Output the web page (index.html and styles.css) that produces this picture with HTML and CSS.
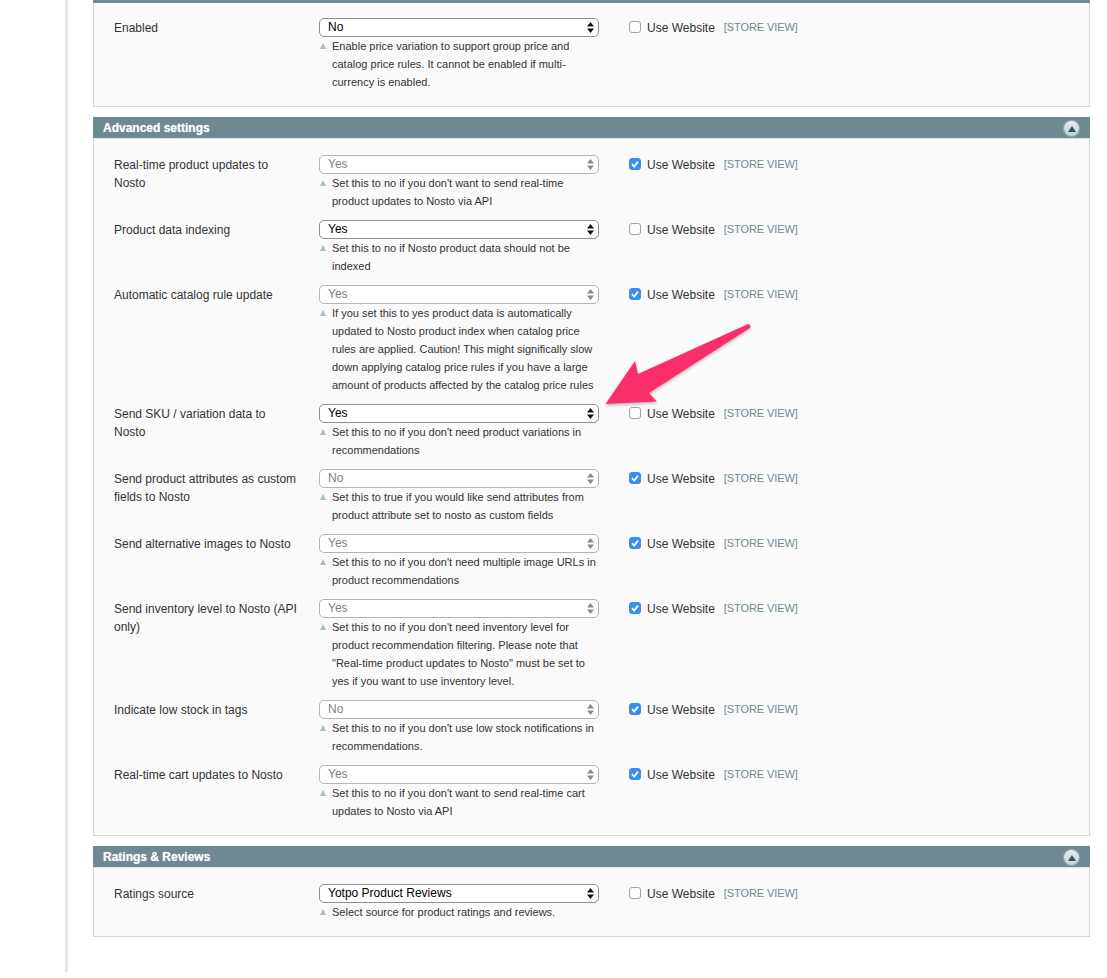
FILE: index.html
```html
<!DOCTYPE html>
<html lang="en">
<head>
<meta charset="utf-8">
<title>Nosto settings</title>
<link rel="stylesheet" href="styles.css">
</head>
<body>
<main class="content">
  <section class="panel panel-cut">
    <div class="panel-body">
      <div class="row">
        <div class="label">Enabled</div>
        <div class="field">
          <div class="select"><span>No</span><svg class="updown" viewBox="0 0 7 11"><path d="M3.5 0L7 4.4H0zM3.5 11L0 6.6h7z"/></svg></div>
          <p class="hint">Enable price variation to support group price and<br>catalog price rules. It cannot be enabled if multi-<br>currency is enabled.</p>
        </div>
        <div class="scope"><span class="check"></span><span class="use">Use Website</span><span class="view">[STORE VIEW]</span></div>
      </div>
    </div>
  </section>

  <section class="panel">
    <header class="head"><h2>Advanced settings</h2><span class="toggle"><i></i></span></header>
    <div class="panel-body">
      <div class="row">
        <div class="label">Real-time product updates to<br>Nosto</div>
        <div class="field">
          <div class="select off"><span>Yes</span><svg class="updown" viewBox="0 0 7 11"><path d="M3.5 0L7 4.4H0zM3.5 11L0 6.6h7z"/></svg></div>
          <p class="hint">Set this to no if you don't want to send real-time<br>product updates to Nosto via API</p>
        </div>
        <div class="scope"><span class="check on"><svg viewBox="0 0 12 12"><path d="M3 6.2l2.2 2.3L9 3.6"/></svg></span><span class="use">Use Website</span><span class="view">[STORE VIEW]</span></div>
      </div>
      <div class="row">
        <div class="label">Product data indexing</div>
        <div class="field">
          <div class="select"><span>Yes</span><svg class="updown" viewBox="0 0 7 11"><path d="M3.5 0L7 4.4H0zM3.5 11L0 6.6h7z"/></svg></div>
          <p class="hint">Set this to no if Nosto product data should not be<br>indexed</p>
        </div>
        <div class="scope"><span class="check"></span><span class="use">Use Website</span><span class="view">[STORE VIEW]</span></div>
      </div>
      <div class="row">
        <div class="label">Automatic catalog rule update</div>
        <div class="field">
          <div class="select off"><span>Yes</span><svg class="updown" viewBox="0 0 7 11"><path d="M3.5 0L7 4.4H0zM3.5 11L0 6.6h7z"/></svg></div>
          <p class="hint">If you set this to yes product data is automatically<br>updated to Nosto product index when catalog price<br>rules are applied. Caution! This might significally slow<br>down applying catalog price rules if you have a large<br>amount of products affected by the catalog price rules</p>
        </div>
        <div class="scope"><span class="check on"><svg viewBox="0 0 12 12"><path d="M3 6.2l2.2 2.3L9 3.6"/></svg></span><span class="use">Use Website</span><span class="view">[STORE VIEW]</span></div>
      </div>
      <div class="row">
        <div class="label">Send SKU / variation data to<br>Nosto</div>
        <div class="field">
          <div class="select"><span>Yes</span><svg class="updown" viewBox="0 0 7 11"><path d="M3.5 0L7 4.4H0zM3.5 11L0 6.6h7z"/></svg></div>
          <p class="hint">Set this to no if you don't need product variations in<br>recommendations</p>
        </div>
        <div class="scope"><span class="check"></span><span class="use">Use Website</span><span class="view">[STORE VIEW]</span></div>
      </div>
      <div class="row">
        <div class="label">Send product attributes as custom<br>fields to Nosto</div>
        <div class="field">
          <div class="select off"><span>No</span><svg class="updown" viewBox="0 0 7 11"><path d="M3.5 0L7 4.4H0zM3.5 11L0 6.6h7z"/></svg></div>
          <p class="hint">Set this to true if you would like send attributes from<br>product attribute set to nosto as custom fields</p>
        </div>
        <div class="scope"><span class="check on"><svg viewBox="0 0 12 12"><path d="M3 6.2l2.2 2.3L9 3.6"/></svg></span><span class="use">Use Website</span><span class="view">[STORE VIEW]</span></div>
      </div>
      <div class="row">
        <div class="label">Send alternative images to Nosto</div>
        <div class="field">
          <div class="select off"><span>Yes</span><svg class="updown" viewBox="0 0 7 11"><path d="M3.5 0L7 4.4H0zM3.5 11L0 6.6h7z"/></svg></div>
          <p class="hint">Set this to no if you don't need multiple image URLs in<br>product recommendations</p>
        </div>
        <div class="scope"><span class="check on"><svg viewBox="0 0 12 12"><path d="M3 6.2l2.2 2.3L9 3.6"/></svg></span><span class="use">Use Website</span><span class="view">[STORE VIEW]</span></div>
      </div>
      <div class="row">
        <div class="label">Send inventory level to Nosto (API<br>only)</div>
        <div class="field">
          <div class="select off"><span>Yes</span><svg class="updown" viewBox="0 0 7 11"><path d="M3.5 0L7 4.4H0zM3.5 11L0 6.6h7z"/></svg></div>
          <p class="hint">Set this to no if you don't need inventory level for<br>product recommendation filtering. Please note that<br>"Real-time product updates to Nosto" must be set to<br>yes if you want to use inventory level.</p>
        </div>
        <div class="scope"><span class="check on"><svg viewBox="0 0 12 12"><path d="M3 6.2l2.2 2.3L9 3.6"/></svg></span><span class="use">Use Website</span><span class="view">[STORE VIEW]</span></div>
      </div>
      <div class="row">
        <div class="label">Indicate low stock in tags</div>
        <div class="field">
          <div class="select off"><span>No</span><svg class="updown" viewBox="0 0 7 11"><path d="M3.5 0L7 4.4H0zM3.5 11L0 6.6h7z"/></svg></div>
          <p class="hint">Set this to no if you don't use low stock notifications in<br>recommendations.</p>
        </div>
        <div class="scope"><span class="check on"><svg viewBox="0 0 12 12"><path d="M3 6.2l2.2 2.3L9 3.6"/></svg></span><span class="use">Use Website</span><span class="view">[STORE VIEW]</span></div>
      </div>
      <div class="row">
        <div class="label">Real-time cart updates to Nosto</div>
        <div class="field">
          <div class="select off"><span>Yes</span><svg class="updown" viewBox="0 0 7 11"><path d="M3.5 0L7 4.4H0zM3.5 11L0 6.6h7z"/></svg></div>
          <p class="hint">Set this to no if you don't want to send real-time cart<br>updates to Nosto via API</p>
        </div>
        <div class="scope"><span class="check on"><svg viewBox="0 0 12 12"><path d="M3 6.2l2.2 2.3L9 3.6"/></svg></span><span class="use">Use Website</span><span class="view">[STORE VIEW]</span></div>
      </div>
    </div>
  </section>

  <section class="panel">
    <header class="head"><h2>Ratings &amp; Reviews</h2><span class="toggle"><i></i></span></header>
    <div class="panel-body">
      <div class="row">
        <div class="label">Ratings source</div>
        <div class="field">
          <div class="select"><span>Yotpo Product Reviews</span><svg class="updown" viewBox="0 0 7 11"><path d="M3.5 0L7 4.4H0zM3.5 11L0 6.6h7z"/></svg></div>
          <p class="hint">Select source for product ratings and reviews.</p>
        </div>
        <div class="scope"><span class="check"></span><span class="use">Use Website</span><span class="view">[STORE VIEW]</span></div>
      </div>
    </div>
  </section>

  <svg class="arrow" viewBox="0 0 170 100" aria-hidden="true">
    <defs>
      <filter id="arrow-shadow" x="-10%" y="-10%" width="120%" height="130%">
        <feDropShadow dx="0" dy="1.5" stdDeviation="1.5" flood-color="#000" flood-opacity="0.3"/>
      </filter>
    </defs>
    <path filter="url(#arrow-shadow)" d="M5.500 90L35 47L38 60L147 10.500Q150 9.500 150.500 12Q150.500 13.500 149 14.500L49 79L57 87.500Z"/>
  </svg>
</main>
</body>
</html>
```

FILE: styles.css
```css
* { box-sizing: border-box; }

html, body { margin: 0; padding: 0; background: #fff; }

body {
  font-family: "Liberation Sans", Arial, sans-serif;
  color: #333;
  height: 978px;
  overflow: hidden;
}

.content {
  position: relative;
  margin-left: 65px;
  width: 1025px;
  height: 972px;
  border-left: 3px solid #cfcfcf;
  border-image: linear-gradient(90deg, #e6e6e6, #cfcfcf 60%, #c4c4c4) 1;
  padding-left: 25px;
}

.panel { margin-bottom: 10px; }

.panel-cut { border-top: 3px solid #6f8992; }

.panel-cut .panel-body { padding-top: 15px; }

.panel-body {
  background: #fafafa;
  border: 1px solid #d6d6d6;
  border-top: 0;
  padding: 16px 0 5px 20px;
}

.head {
  display: flex;
  align-items: flex-start;
  justify-content: space-between;
  height: 22px;
  padding: 0 10px;
  background: #6f8992;
  border-bottom: 1px solid #dfe5e7;
}

.head h2 {
  margin: 0;
  padding-top: 2px;
  font-size: 12px;
  font-weight: bold;
  line-height: 19px;
  color: #fff;
  text-shadow: 0 0 1px rgba(255, 255, 255, 0.6);
}

.toggle {
  display: flex;
  align-items: center;
  justify-content: center;
  width: 15px;
  height: 15px;
  margin: 4px 1px 0 0;
  border-radius: 50%;
  background: linear-gradient(#e6eeef, #c2d1d5);
  box-shadow: 0 0 1px 1px rgba(255, 255, 255, 0.3);
}

.toggle i {
  width: 0;
  height: 0;
  border-left: 4px solid transparent;
  border-right: 4px solid transparent;
  border-bottom: 6px solid #2d5366;
}

.row {
  display: flex;
  align-items: flex-start;
  padding-bottom: 10px;
}

.label {
  width: 205px;
  flex: none;
  padding-top: 1px;
  font-size: 12px;
  line-height: 18px;
  color: #333;
}

.field { width: 280px; flex: none; }

.select {
  display: flex;
  align-items: center;
  justify-content: space-between;
  height: 19px;
  padding: 0 4px 0 8px;
  background: #fff;
  border: 1px solid #8f8f8f;
  border-radius: 5px;
  font-size: 12px;
  line-height: 15px;
  color: #000;
}

.updown { width: 7px; height: 11px; fill: #111; }

.select.off { border-color: #b4b4b4; color: #808080; }

.select.off .updown { fill: #8a8a8a; }

.hint {
  position: relative;
  margin: 0;
  padding-left: 13px;
  font-size: 11px;
  line-height: 18px;
  color: #333;
  white-space: nowrap;
}

.hint::before {
  content: "";
  position: absolute;
  left: 1px;
  top: 6px;
  border-left: 3.5px solid transparent;
  border-right: 3.5px solid transparent;
  border-bottom: 6px solid #a9bcc2;
}

.scope {
  display: flex;
  align-items: center;
  height: 19px;
  margin-left: 30px;
  white-space: nowrap;
}

.check {
  display: flex;
  width: 12px;
  height: 12px;
  margin: -1px 6px 0 0;
  background: #fff;
  border: 1px solid #a3a3a3;
  border-radius: 3px;
}

.check.on { background: #3a8df2; border-color: #3a8df2; }

.check svg {
  width: 12px;
  height: 12px;
  margin: -1px;
  fill: none;
  stroke: #fff;
  stroke-width: 1.8;
}

.use {
  margin-right: 9px;
  padding-top: 1px;
  font-size: 12px;
  color: #333;
}

.view {
  margin-top: -1px;
  font-size: 11px;
  letter-spacing: -0.08px;
  color: #6f8992;
}

.arrow {
  position: absolute;
  left: 532px;
  top: 314px;
  width: 170px;
  height: 100px;
  fill: #fb2f6c;
  pointer-events: none;
}
```
